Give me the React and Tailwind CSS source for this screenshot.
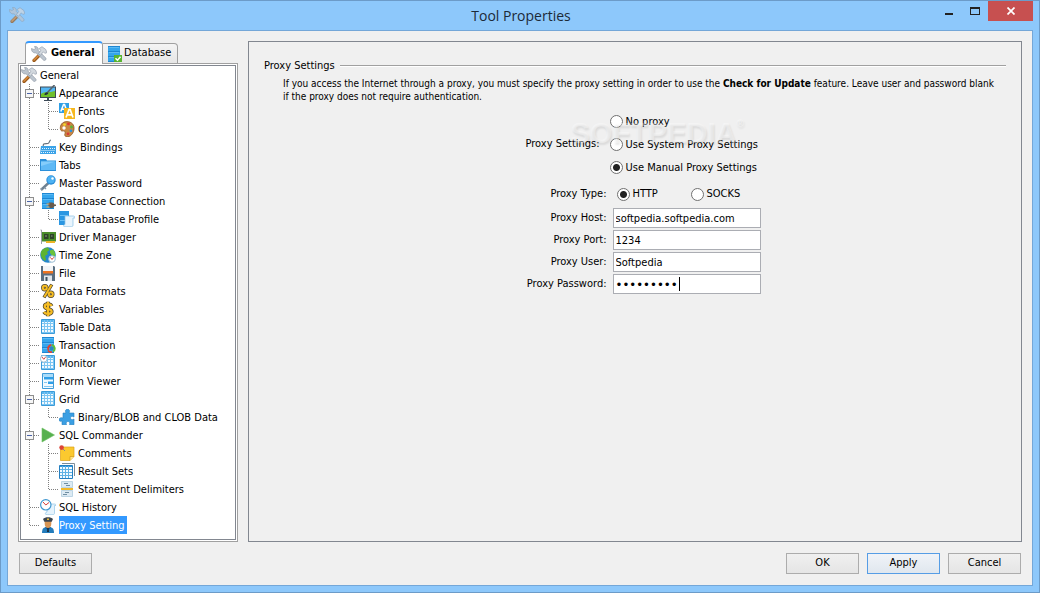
import { useState } from 'react'

const Icon = ({ children }) => (
    <svg className="size-4 shrink-0" viewBox="0 0 16 16" fill="none" aria-hidden="true">{children}</svg>
)

const ToolsIcon = () => (
    <Icon>
        <path d="M3 14.500 8.500 9" stroke="#9a5a1c" strokeWidth="3.200" strokeLinecap="round"/>
        <path d="M3 14 8.500 8.500" stroke="#d88a3c" strokeWidth="1.600" strokeLinecap="round"/>
        <path d="M.500 2.500 3 3.500 4.500 2.500 3.500.500C6 0 7.700 2 7.200 4.300L14.800 12c1 1-.500 3.200-2.200 2.200L5 6.800C2.300 7.500.100 5 .500 2.500Z" fill="#bcc5cf" stroke="#8993a0" strokeWidth=".600"/>
        <path d="M8.200 2.500 11 .700l3.800 2.800 1 3.200-2 .600-1.500-1.500L9.500 9.300 7.500 7.500l2.200-3Z" fill="#d3d9df" stroke="#8791a0" strokeWidth=".600"/>
    </Icon>
)

const Database = () => (
    <>
        <path d="M2 0h12v16H2z" fill="#1f86d1"/>
        <path d="M2 1h12v4H2zM2 6h12v4H2zM2 11h12v4H2z" fill="#35a5ec"/>
        <path d="M3 1.500h10M3 6.500h10M3 11.500h10" stroke="#5cbaf4"/>
    </>
)

const DatabaseIcon = () => (
    <Icon>
        <Database/>
        <path d="M8 9h8v7H8z" fill="#58b531"/>
        <path d="m9.500 12.200 2 2 3-3.400" stroke="#fff" strokeWidth="1.500"/>
    </Icon>
)

const AppearanceIcon = () => (
    <Icon>
        <path d="M0 1.500h16V13H0z" fill="#3c4a57"/>
        <path d="M1 2.500h14V12H1z" fill="#54b7f4"/>
        <path d="M1 9c4-3 8-1 14-3v6H1Z" fill="#6fc02c"/>
        <path d="M7 13h2v2h3v1H4v-1h3z" fill="#3c4a57"/>
        <path d="m7.500 7.500 7-7.500" stroke="#59646e" strokeWidth="1.600"/>
        <path d="M4.500 10c0-2 1.500-3 3-2.500S8 10 4.500 10Z" fill="#25303a"/>
    </Icon>
)

const FontsIcon = () => (
    <Icon>
        <path d="M0 0h10v10H0z" fill="#2f9fe6"/>
        <path d="m1.800 8.500 2.700-7h1l2.500 7M3 6.200h4.200" stroke="#fff" strokeWidth="1.500"/>
        <path d="M5 5h11v11H5z" fill="#f6b81f"/>
        <path d="m7 14.500 3-8h1.200l2.800 8M8.200 11.800h4.800" stroke="#fff" strokeWidth="1.700"/>
    </Icon>
)

const ColorsIcon = () => (
    <Icon>
        <path d="M3.500 2C7-.500 12.500.500 14.300 4c2 4-.300 10-4.300 11.500-3 1-5-.500-4-3 .6-2-.500-3-2.500-2.500C.800 10.500.400 4.500 3.500 2Z" fill="#c98743" stroke="#8f5620" strokeWidth=".800"/>
        <circle cx="5" cy="7" r="1.700" fill="#fff"/>
        <circle cx="5.500" cy="3.600" r="1.400" fill="#f4d428"/>
        <circle cx="9.500" cy="2.900" r="1.400" fill="#e0382c"/>
        <circle cx="12.500" cy="6" r="1.400" fill="#57b535"/>
        <circle cx="12" cy="9.800" r="1.400" fill="#2b8fe0"/>
        <circle cx="9" cy="12.800" r="1.400" fill="#d83a3a"/>
    </Icon>
)

const KeyboardIcon = () => (
    <Icon>
        <path d="M3.500 8C2 3.500 6 5 8 4.500S9 1 11 1" stroke="#66727d" strokeWidth="1.200"/>
        <path d="M1 7h15v8H0z" fill="#3ba3e8"/>
        <path d="M2 9.500h13M1.500 11.500h13.500M1 13.500h14" stroke="#e6f5ff" strokeDasharray="1 1"/>
    </Icon>
)

const FolderIcon = () => (
    <Icon>
        <path d="M0 2h6l1 1.500h9V14H0z" fill="#2b8fd9"/>
        <path d="M1 4.500h14.500V13H1z" fill="#60b9f5"/>
        <path d="M1 4.500h14.500L1 9z" fill="#85cdfb"/>
    </Icon>
)

const KeyIcon = () => (
    <Icon>
        <path d="M1 15 9 7.500" stroke="#6f8191" strokeWidth="2.400"/>
        <path d="m2 15-1-2M4.500 12.500l1.500 1.500" stroke="#8698a8" strokeWidth="1.300"/>
        <circle cx="11" cy="5" r="4.700" fill="#2d8fd9"/>
        <circle cx="11" cy="4.700" r="3.600" fill="#4db2f3"/>
        <circle cx="12.500" cy="3.500" r="1.200" fill="#fff"/>
    </Icon>
)

const ConnectionIcon = () => (
    <Icon>
        <Database/>
        <path d="M9 9.500h3c1.500 0 2.200.800 2.500 2H16v1.500h-1.500c-.5 1.500-1.500 2-3 2H10c-2-1-2-4.500-1-5.500Z" fill="#6b5b4b"/>
        <path d="M6.500 11h3M6.500 14h3" stroke="#e3a95e" strokeWidth="1.200"/>
    </Icon>
)

const ProfileIcon = () => (
    <Icon>
        <path d="M0 0h10v14H0z" fill="#2b97e2"/>
        <path d="M1 4.500h8M1 9.500h8" stroke="#6bc0f5"/>
        <path d="M6 5h8.500c1 0 1.500.800 1.500 2h-2v7c0 1-.7 1.800-1.600 1.800H5.500C4 15.500 4.500 13.500 6 13.500Z" fill="#e9f5fd" stroke="#86bfe3" strokeWidth=".700"/>
    </Icon>
)

const DriverIcon = () => (
    <Icon>
        <path d="M.500 1h1v14" stroke="#9aa2aa"/>
        <path d="M2 3h14v9.500H2z" fill="#4a8c2b"/>
        <path d="M4 5h4.500v5H4zM10 5h4v5h-4z" fill="#2d4429"/>
        <path d="M5 6h2v2H5zM11 6h1.500v2H11z" fill="#5b6d58"/>
        <path d="M6 12h9v2H6z" fill="#edb526"/>
    </Icon>
)

const ClockFace = ({ x, y, r }) => (
    <>
        <circle cx={x} cy={y} r={r} fill="#fff" stroke="#9cbdd2"/>
        <path d={`M${x - r / 2} ${y - r / 2} ${x} ${y + 0.5} ${x + r / 2} ${y - r / 2}`} stroke="#d6403a"/>
    </>
)

const TimeZoneIcon = () => (
    <Icon>
        <circle cx="8" cy="8" r="7.800" fill="#2587cc"/>
        <path d="M1 5C2.500 1.500 6 .500 8 .500L9.500 3 7 5l1 2-3 2 1 3-1 2C1.500 12 .300 8.500 1 5Z" fill="#5db331"/>
        <path d="M10 3.500 13 2.500c2 2 2.700 5 2 7L12 8.500 10 6Z" fill="#6bc23a"/>
        <ClockFace x={12} y={12} r={3.3}/>
    </Icon>
)

const FileIcon = () => (
    <Icon>
        <path d="M1 1h13l1 1v14H1z" fill="#5a6f81"/>
        <path d="M3 1h10v6H3z" fill="#f3f5f7"/>
        <path d="M3 6h10v2.500H3z" fill="#ee7420"/>
        <path d="M4 10.500h8V16H4z" fill="#e1e7ec"/>
        <path d="M5.500 12h2v4h-2z" fill="#3f5262"/>
    </Icon>
)

const PercentIcon = () => (
    <Icon>
        <g stroke="#4b4430" strokeWidth="3.400">
            <circle cx="4.800" cy="4.800" r="2"/><circle cx="10.800" cy="11.200" r="2"/><path d="M4 14.500 11.800 1.500"/>
        </g>
        <g stroke="#f6bd24" strokeWidth="2">
            <circle cx="4.800" cy="4.800" r="2"/><circle cx="10.800" cy="11.200" r="2"/><path d="M4.300 14 11.500 2"/>
        </g>
    </Icon>
)

const dollar = 'M11.500 5.200C10.500 2.500 4.700 2.500 4.700 5.400c0 3 7 2 7 5.200 0 3-6 3.200-7.700.300M8 .800v14.500'

const DollarIcon = () => (
    <Icon>
        <path d={dollar} stroke="#4b4430" strokeWidth="3.800"/>
        <path d={dollar} stroke="#f6bd24" strokeWidth="2.300"/>
    </Icon>
)

const Table = () => (
    <>
        <path d="M1 1h14v14H1z" fill="#f2faff"/>
        <path d="M1 1h14v2H1z" fill="#5ab6ef"/>
        <path d="M4.500 1v14M7.500 1v14M10.500 1v14M13.500 1v14M1 4.500h14M1 7.500h14M1 10.500h14M1 13.500h14" stroke="#7cc5f2"/>
        <path d="M1.500.500h13v14h-13z" stroke="#3a9bd9"/>
    </>
)

const TableIcon = () => <Icon><Table/></Icon>

const TransactionIcon = () => (
    <Icon>
        <Database/>
        <circle cx="11.500" cy="11.500" r="2" fill="#2c86c4"/>
        <path d="M8.300 13a3.600 3.600 0 0 1 3-5" stroke="#e8402c" strokeWidth="1.800"/>
        <path d="M12 8a3.600 3.600 0 0 1 1 6.500" stroke="#62bd34" strokeWidth="2"/>
        <path d="M8 13.500a4 4 0 0 0 4 1.500" stroke="#e8402c" strokeWidth="1.600"/>
    </Icon>
)

const MonitorIcon = () => (
    <Icon>
        <Table/>
        <ClockFace x={3.8} y={3.8} r={3.4}/>
    </Icon>
)

const FormIcon = () => (
    <Icon>
        <path d="M2.500.500h11v15h-11z" fill="#f3faff" stroke="#3f9bd8"/>
        <path d="M3 1h10v3H3z" fill="#a9dcfa"/>
        <path d="M4 4h9v2.500H4zM8 8.500h5V11H8z" fill="#2e9fe8"/>
        <path d="M4 9.500h3M4 13.500h9" stroke="#85c8f0"/>
    </Icon>
)

const PuzzleIcon = () => (
    <Icon>
        <path d="M4 4h3C5.500 1.500 7 .300 8.500.300S11.500 1.500 10 4h5v4c-2.500-1.500-3.500 0-3.500 1s1 2.500 3.500 1v5.700h-4.500c1-2.500-.500-3.200-1.500-3.200s-2.500.700-1.500 3.200H3V12c-2.500 1-3-.500-3-1.500S1 8 4 9Z" fill="#3b9fe3" stroke="#257fc0" strokeWidth=".600"/>
    </Icon>
)

const PlayIcon = () => (
    <Icon>
        <path d="M2 1v14l12.500-7z" fill="#57b04f" stroke="#6cbf62" strokeWidth=".600"/>
    </Icon>
)

const NoteIcon = () => (
    <Icon>
        <path d="M1.500 2H15v9.500L11 15.500H1.500z" fill="#fbc92f" stroke="#dda21b" strokeWidth=".700"/>
        <path d="M15 11.500h-4v4" fill="#ffe68a" stroke="#d39a17" strokeWidth=".700"/>
        <path d="m3 3 3 3" stroke="#8b8b8b"/>
        <circle cx="2.600" cy="2.600" r="2.300" fill="#dc4438"/>
    </Icon>
)

const ResultIcon = () => (
    <Icon>
        <path d="M3 .500h12.500V13" stroke="#7e8d99"/>
        <path d="M.500 2.500h13v13H.500z" fill="#f3faff" stroke="#257fc0"/>
        <path d="M1 3h12v1H1z" fill="#3198df"/>
        <path d="M3.500 3v12M6.500 3v12M9.500 3v12M1 6.500h12M1 9.500h12M1 12.500h12" stroke="#5fb1e4"/>
    </Icon>
)

const DelimiterIcon = () => (
    <Icon>
        <path d="M2.500.500h11v6h-11zM2.500 9.500h11v6h-11z" fill="#dceaf3" stroke="#bcd5e4"/>
        <path d="M5 2.500h4M7 4.500h4M6 11.500h4M4 13.500h4" stroke="#6f8ea2"/>
        <path d="M2 7h12v2H2z" fill="#f2b92b"/>
    </Icon>
)

const HistoryIcon = () => (
    <Icon>
        <path d="M7 5h7.500c1 0 1.500.500 1.500 1.500h-1.500V14c0 1-.5 1.700-1.500 1.700H6C4.500 15 5.500 13 7 13Z" fill="#e5f3fd" stroke="#93c5e6" strokeWidth=".700"/>
        <circle cx="5.800" cy="5.800" r="5.200" fill="#fff" stroke="#3f97d0" strokeWidth="1.200"/>
        <path d="m3 3 2.800 3L9 3.500" stroke="#d6403a"/>
    </Icon>
)

const OfficerIcon = () => (
    <Icon>
        <path d="M2 16c0-4.500 1.500-6 6-6s6 1.500 6 6z" fill="#237cbc"/>
        <path d="M5 10.200h6L8 13.500z" fill="#17548a"/>
        <path d="M7.500 10.500h1L9 15H7z" fill="#182a3a"/>
        <path d="M4.700 3.500h6.600V7c0 2-1.300 4-3.300 4S4.700 9 4.700 7Z" fill="#d89554"/>
        <path d="M3 2C5-.300 11-.300 13 2l-1.300 2.700H4.300z" fill="#3a4550"/>
        <path d="M7 1.500h2v1.500H7z" fill="#e5b93a"/>
    </Icon>
)

const tree = [
    { label: 'Appearance', icon: AppearanceIcon, items: [['Fonts', FontsIcon], ['Colors', ColorsIcon]] },
    { label: 'Key Bindings', icon: KeyboardIcon },
    { label: 'Tabs', icon: FolderIcon },
    { label: 'Master Password', icon: KeyIcon },
    { label: 'Database Connection', icon: ConnectionIcon, items: [['Database Profile', ProfileIcon]] },
    { label: 'Driver Manager', icon: DriverIcon },
    { label: 'Time Zone', icon: TimeZoneIcon },
    { label: 'File', icon: FileIcon },
    { label: 'Data Formats', icon: PercentIcon },
    { label: 'Variables', icon: DollarIcon },
    { label: 'Table Data', icon: TableIcon },
    { label: 'Transaction', icon: TransactionIcon },
    { label: 'Monitor', icon: MonitorIcon },
    { label: 'Form Viewer', icon: FormIcon },
    { label: 'Grid', icon: TableIcon, items: [['Binary/BLOB and CLOB Data', PuzzleIcon]] },
    {
        label: 'SQL Commander',
        icon: PlayIcon,
        items: [['Comments', NoteIcon], ['Result Sets', ResultIcon], ['Statement Delimiters', DelimiterIcon]],
    },
    { label: 'SQL History', icon: HistoryIcon },
    { label: 'Proxy Setting', icon: OfficerIcon },
]

// Dotted guide in front of a tree row
const Guide = ({ branch = true, last, box }) => (
    <svg className="h-[18px] w-[19px] shrink-0" viewBox="0 0 19 18" fill="none" shapeRendering="crispEdges" aria-hidden="true">
        <path d={last ? 'M8.500 0v10' : 'M8.500 0v18'} stroke="#808080" strokeDasharray="1 1"/>
        {branch && <path d="M9 9.500h9" stroke="#808080" strokeDasharray="1 1"/>}
        {box && (
            <>
                <path d="M4.500 5.500h8v8h-8z" fill="#f6f6f6" stroke="#8e8e8e"/>
                <path d="M6 9.500h5" stroke="#4b63a7"/>
            </>
        )}
    </svg>
)

const TreeLabel = ({ icon: Glyph, label, selected, onSelect }) => (
    <button type="button" onClick={onSelect} className="flex items-center gap-[3px] whitespace-nowrap">
        <Glyph/>
        <span className={selected ? 'h-[18px] bg-[#3399ff] pr-0.5 leading-5 text-white' : 'h-[18px] pr-0.5 leading-5'}>
            {label}
        </span>
    </button>
)

const Tree = () => {
    const [selected, setSelected] = useState('Proxy Setting')
    const row = (label, icon) => (
        <TreeLabel icon={icon} label={label} selected={selected === label} onSelect={() => setSelected(label)}/>
    )

    return (
        <div className="flex-1 border border-[#a0a0a0] bg-white p-px">
            <div className="h-full border border-[#828790]">
                {row('General', ToolsIcon)}
                <ul>
                    {tree.map(({ label, icon, items = [] }, i) => (
                        <li key={label}>
                            <div className="flex">
                                <Guide last={i === tree.length - 1} box={items.length > 0}/>
                                {row(label, icon)}
                            </div>
                            {items.length > 0 && (
                                <ul>
                                    {items.map(([name, glyph], j) => (
                                        <li key={name} className="flex">
                                            <Guide branch={false}/>
                                            <Guide last={j === items.length - 1}/>
                                            {row(name, glyph)}
                                        </li>
                                    ))}
                                </ul>
                            )}
                        </li>
                    ))}
                </ul>
            </div>
        </div>
    )
}

const TitleBar = () => (
    <header className="grid h-[29px] grid-cols-[1fr_auto_1fr] pr-1.5 pl-2">
        <div className="pt-1.5 opacity-70"><ToolsIcon/></div>
        <h1 className="font-['Open_Sans',sans-serif] text-[14px] leading-[29px] text-[#1c2a38]">Tool Properties</h1>
        <div className="flex items-start justify-end">
            <button type="button" aria-label="Minimize" className="flex h-5 w-[26px] items-center justify-center">
                <svg className="h-5 w-2" viewBox="0 0 8 20" aria-hidden="true"><path d="M0 12h8v2H0z" fill="#222"/></svg>
            </button>
            <button type="button" aria-label="Maximize" className="flex h-5 w-[26px] items-center justify-center">
                <svg className="h-5 w-2.5" viewBox="0 0 10 20" aria-hidden="true">
                    <path d="M0 6h10v8H0zM1 8v5h8V8z" fill="#222" fillRule="evenodd"/>
                </svg>
            </button>
            <button type="button" aria-label="Close" className="flex h-5 w-[45px] items-center justify-center bg-[#c75050]">
                <svg className="size-2" viewBox="0 0 8 8" aria-hidden="true">
                    <path d="m.500.500 7 7m0-7-7 7" stroke="#fff" strokeWidth="1.700"/>
                </svg>
            </button>
        </div>
    </header>
)

const Radio = ({ label, ...props }) => (
    <label className="flex items-center gap-[3px]">
        <input
            type="radio"
            className="size-[13px] appearance-none rounded-full border border-[#707070] bg-white checked:bg-[radial-gradient(circle,#222_3px,#fff_4px)]"
            {...props}
        />
        {label}
    </label>
)

const Field = ({ id, label, children, ...props }) => (
    <div className="flex items-center gap-1.5">
        <label htmlFor={id} className="w-[81px] text-right whitespace-nowrap">{label}</label>
        <div className="relative">
            <input
                id={id}
                className="h-5 w-[148px] border border-[#abadb3] bg-white px-0.5 outline-none [&[type=password]]:text-[13px]"
                {...props}
            />
            {children}
        </div>
    </div>
)

const ProxyForm = () => (
    <form className="flex justify-center pl-4">
        <div className="relative">
            <div role="radiogroup" aria-labelledby="mode" className="mt-[7px] flex items-center">
                <span id="mode" className="w-[84px]">Proxy Settings:</span>
                <div className="leading-[23px]">
                    <Radio name="mode" label="No proxy"/>
                    <Radio name="mode" label="Use System Proxy Settings"/>
                    <Radio name="mode" label="Use Manual Proxy Settings" defaultChecked/>
                </div>
            </div>
            <div role="radiogroup" aria-labelledby="type" className="mt-1.5 flex h-[18px] items-center gap-2.5">
                <span id="type" className="w-[81px] text-right">Proxy Type:</span>
                <div className="flex">
                    <div className="w-[74px]"><Radio name="type" label="HTTP" defaultChecked/></div>
                    <Radio name="type" label="SOCKS"/>
                </div>
            </div>
            <div className="mt-[5px] space-y-0.5">
                <Field id="host" label="Proxy Host:" defaultValue="softpedia.softpedia.com"/>
                <Field id="port" label="Proxy Port:" defaultValue="1234"/>
                <Field id="user" label="Proxy User:" defaultValue="Softpedia"/>
                <Field id="password" label="Proxy Password:" type="password" defaultValue="softpedia">
                    <span className="absolute top-[3px] left-[66px] h-3.5 w-px bg-black"/>
                </Field>
            </div>
            <span className="pointer-events-none absolute top-[9px] left-[45px] flex font-['Liberation_Sans',Arial,sans-serif] text-[29px] leading-[42px] font-bold text-white/35 [text-shadow:1px_2px_2px_rgb(0_0_0/0.09)]">
                SOFTPEDIA<span className="text-[10px] leading-6">®</span>
            </span>
        </div>
    </form>
)

const Button = ({ primary, children }) => (
    <button
        type="button"
        className={primary
            ? 'h-[21px] w-[73px] border border-[#569de5] bg-linear-to-b from-[#f0f3f8] to-[#e0e7ee]'
            : 'h-[21px] w-[73px] border border-[#acacac] bg-linear-to-b from-[#f0f0f0] to-[#e5e5e5]'}
    >
        {children}
    </button>
)

const App = () => (
    <div className="flex min-h-screen flex-col border border-[#6c9bc8] bg-[#8dc8fb] font-['DejaVu_Sans_Condensed','DejaVu_Sans',Tahoma,sans-serif] text-[11px] text-black">
        <TitleBar/>
        <main className="mx-1.5 mb-1.5 flex flex-1 flex-col border border-[#74a7d8] bg-[#f0f0f0] px-2.5 pt-2.5 pb-[11px]">
            <div className="flex flex-1 gap-2.5">
                <nav className="flex w-[220px] shrink-0 flex-col">
                    <div role="tablist" className="z-10 -mb-px ml-[7px] flex h-[23px] items-end">
                        <button type="button" role="tab" aria-selected="true" className="flex h-[23px] w-[78px] items-center gap-1 rounded-t-sm border-x border-t-2 border-x-[#a0a0a0] border-t-[#3399ff] bg-white pl-[5px] font-bold">
                            <ToolsIcon/>General
                        </button>
                        <button type="button" role="tab" aria-selected="false" className="flex h-[21px] w-[75px] items-center gap-0.5 rounded-tr-sm border border-l-0 border-[#a0a0a0] bg-linear-to-b from-[#f4f4f4] to-[#e6e6e6] pl-[3px]">
                            <DatabaseIcon/>Database
                        </button>
                    </div>
                    <Tree/>
                </nav>
                <section className="min-w-0 flex-1 border border-[#828790] px-[15px] pt-4">
                    <h2 className="flex h-4 items-center gap-[5px]">
                        Proxy Settings
                        <span className="h-0.5 flex-1 border-t border-[#a0a0a0] bg-white"/>
                    </h2>
                    <p className="mt-[3px] pr-2 pl-[19px] text-[10px] leading-[13px]">
                        If you access the Internet through a proxy, you must specify the proxy setting in order to use the <b>Check
                        for Update</b> feature. Leave user and password blank if the proxy does not require authentication.
                    </p>
                    <ProxyForm/>
                </section>
            </div>
            <footer className="mt-[11px] flex justify-between px-px">
                <Button>Defaults</Button>
                <div className="flex gap-2">
                    <Button>OK</Button>
                    <Button primary>Apply</Button>
                    <Button>Cancel</Button>
                </div>
            </footer>
        </main>
    </div>
)

export default App
